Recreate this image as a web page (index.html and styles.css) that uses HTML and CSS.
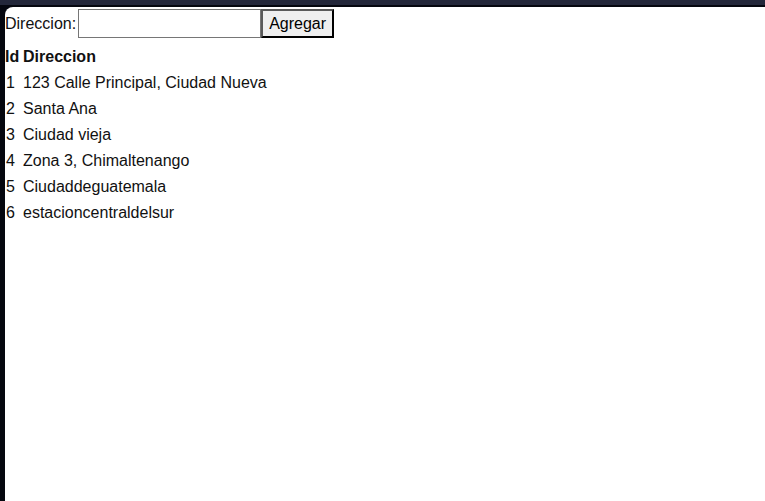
FILE: index.html
```html
<!DOCTYPE html>
<html lang="es">
<head>
<meta charset="utf-8">
<title>Direcciones</title>
<link rel="stylesheet" href="styles.css">
</head>
<body>
<div class="chrome-top"></div>
<div class="frame">
  <main class="page">
    <form class="add-form">
      <label class="label" for="dir">Direccion:</label><input id="dir" class="field" type="text"><button type="button" class="btn">Agregar</button>
    </form>
    <table class="list">
      <thead>
        <tr><th class="col-id">Id</th><th>Direccion</th></tr>
      </thead>
      <tbody>
        <tr><td class="col-id">1</td><td>123 Calle Principal, Ciudad Nueva</td></tr>
        <tr><td class="col-id">2</td><td>Santa Ana</td></tr>
        <tr><td class="col-id">3</td><td>Ciudad vieja</td></tr>
        <tr><td class="col-id">4</td><td>Zona 3, Chimaltenango</td></tr>
        <tr><td class="col-id">5</td><td>Ciudaddeguatemala</td></tr>
        <tr><td class="col-id">6</td><td>estacioncentraldelsur</td></tr>
      </tbody>
    </table>
  </main>
</div>
</body>
</html>
```
FILE: styles.css
```css
html, body {
  margin: 0;
  height: 100%;
}
body {
  background: #05070f;
  display: flex;
  flex-direction: column;
  font-family: "Liberation Sans", Arial, sans-serif;
  font-size: 16px;
  color: #111;
  overflow: hidden;
}
.chrome-top {
  height: 5px;
  background: #23273a;
  flex: none;
}
.frame {
  flex: 1;
  padding: 2px 0 0 5px;
  display: flex;
}
.page {
  flex: 1;
  background: #fff;
  border-top-left-radius: 8px;
  padding-top: 2px;
}
.add-form {
  display: flex;
  align-items: center;
  height: 29px;
}
.label {
  line-height: 20px;
}
.field {
  width: 183px;
  height: 29px;
  box-sizing: border-box;
  border: 1px solid #767676;
  margin: 0 0 0 2px;
  padding: 1px 2px;
  font: inherit;
}
.btn {
  width: 73px;
  height: 29px;
  box-sizing: border-box;
  margin: 0;
  border: 2px solid #000;
  border-color: #5a5a5a #000 #000 #5a5a5a;
  background: #efefef;
  font: inherit;
  color: #000;
  padding: 0 6px;
}
.list {
  border-spacing: 0;
  margin-top: 6px;
}
.list th, .list td {
  padding: 0;
  line-height: 26px;
  text-align: left;
}
.list th {
  font-weight: bold;
}
.list .col-id {
  width: 18px;
  box-sizing: border-box;
}
.list td.col-id {
  padding-left: 1px;
}
```
